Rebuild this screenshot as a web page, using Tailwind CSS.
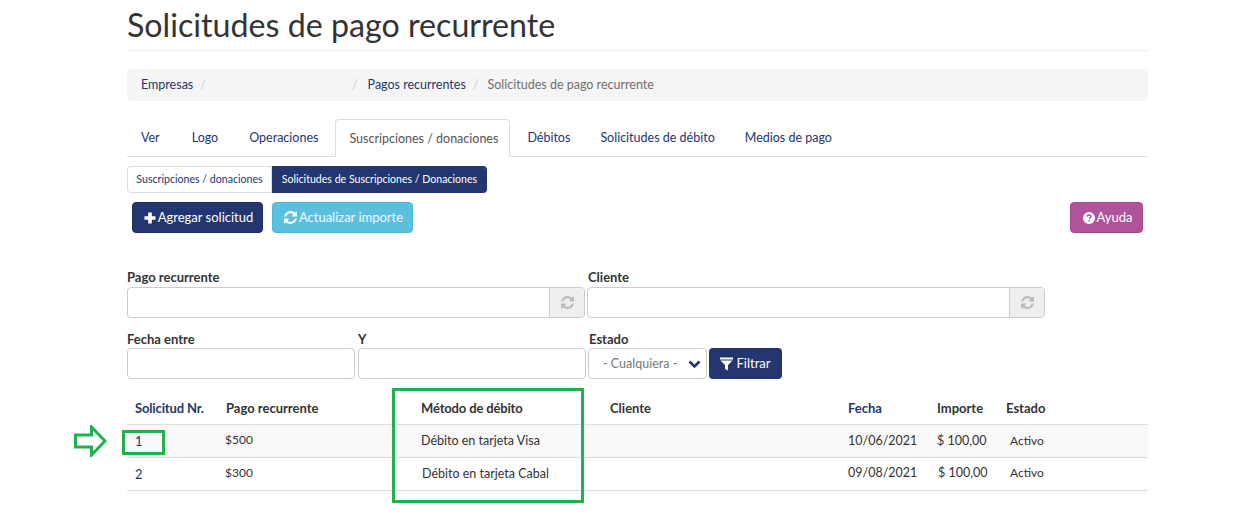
<!DOCTYPE html>
<html lang="es">
<head>
    <meta charset="UTF-8">
    <title>Solicitudes de pago recurrente</title>
    <script src="https://cdn.jsdelivr.net/npm/@tailwindcss/browser@4"></script>
</head>
<body class="bg-white font-['Lato',sans-serif] text-[13px] text-[#333]">
    <div class="relative w-[1021px] ml-[127px] h-[531px]">
        <!-- titulo -->
        <h1 class="h-[51px] border-b border-[#eee] text-[32.200px] leading-[50px] text-[#333]">Solicitudes de pago recurrente</h1>

        <!-- breadcrumb -->
        <div class="mt-[18px] h-[32px] bg-[#f5f5f5] rounded flex items-center px-[14px] text-[12.500px] text-[#6f6f6f]">
            <span class="text-[#23366f]">Empresas</span>
            <span class="ml-[7px] text-[#ccc]">/</span>
            <span class="ml-[146px] text-[#ccc]">/</span>
            <span class="ml-[10px] text-[#23366f]">Pagos recurrentes</span>
            <span class="ml-[7px] text-[#ccc]">/</span>
            <span class="ml-[9px]">Solicitudes de pago recurrente</span>
        </div>

        <!-- tabs -->
        <div class="mt-[18px] h-[38px] border-b border-[#ddd] flex text-[12.500px] text-[#23366f] whitespace-nowrap">
            <a class="pl-[14px] pr-[17px] pt-[10px]">Ver</a>
            <a class="px-[15px] pt-[10px]">Logo</a>
            <a class="pl-[16px] pr-[17px] pt-[10px]">Operaciones</a>
            <a class="w-[175px] h-[38px] px-[13px] pt-[10px] bg-white border border-[#ddd] border-b-white rounded-t text-[#555]">Suscripciones / donaciones</a>
            <a class="pl-[17px] pr-[15px] pt-[10px]">Débitos</a>
            <a class="px-[15px] pt-[10px]">Solicitudes de débito</a>
            <a class="px-[15px] pt-[10px]">Medios de pago</a>
        </div>

        <!-- subtabs -->
        <div class="mt-[9px] flex h-[27px] text-[10.600px] leading-[25px] whitespace-nowrap">
            <a class="w-[145px] border border-[#ddd] rounded-l text-center text-[#23366f]">Suscripciones / donaciones</a>
            <a class="w-[215px] bg-[#23366f] rounded-r text-center leading-[27px] text-white">Solicitudes de Suscripciones / Donaciones</a>
        </div>

        <!-- botones -->
        <div class="mt-[9px] flex h-[31px] pl-[5px] pr-[5px]">
            <button class="w-[131px] pl-[2px] bg-[#23366f] border border-[#1c2c5c] rounded text-white flex items-center justify-center gap-[2px]">
                <svg class="w-[12px] h-[12px]" viewBox="0 0 12 12"><path d="M4.200 0.500h3.600v3.700h3.700v3.600H7.800v3.700H4.200V7.800H0.500V4.200h3.700z" fill="#fff"/></svg>
                Agregar solicitud
            </button>
            <button class="ml-[9px] w-[141px] pl-[2px] bg-[#5bc0de] border border-[#46b8da] rounded text-white/90 flex items-center justify-center gap-[2px]">
                <svg class="w-[13px] h-[13px]" viewBox="0 0 1536 1536"><path fill="#fff" d="M1511 928q0 5-1 7-64 268-268 434.500T764 1536q-146 0-282.500-55T238 1324l-129 129q-19 19-45 19t-45-19-19-45V960q0-26 19-45t45-19h448q26 0 45 19t19 45-19 45l-137 137q71 66 161 102t187 36q134 0 250-65t186-179q11-17 53-117 8-23 30-23h192q13 0 22.500 9.500t9.500 22.500zm25-800v448q0 26-19 45t-45 19h-448q-26 0-45-19t-19-45 19-45l138-138q-148-137-349-137-134 0-250 65T332 500q-11 17-53 117-8 23-30 23H50q-13 0-22.500-9.500T18 608v-7q65-268 270-434.500T768 0q146 0 284 55.500T1297 212l130-129q19-19 45-19t45 19 19 45z"/></svg>
                Actualizar importe
            </button>
            <button class="ml-auto w-[73px] pl-[2px] bg-[#b0539b] border border-[#a34a8f] rounded text-white flex items-center justify-center gap-[2px]">
                <svg class="w-[12px] h-[12px]" viewBox="0 0 12 12"><circle cx="6" cy="6" r="6" fill="#fff"/><path d="M4.100 4.600C4.200 3.500 5 3 6 3c1.100 0 1.900.6 1.900 1.500 0 1.300-1.500 1.300-1.500 2.300" fill="none" stroke="#b0539b" stroke-width="1.400"/><rect x="5.500" y="7.800" width="1.600" height="1.500" fill="#b0539b"/></svg>
                Ayuda
            </button>
        </div>

        <!-- filtros -->
        <div class="mt-[36px] flex">
            <div class="w-[458px] mr-[2px]">
                <label class="block h-[18px] leading-[16px] font-bold">Pago recurrente</label>
                <div class="h-[31px] border border-[#ccc] rounded flex justify-end">
                    <span class="w-[35px] bg-[#eee] border-l border-[#ccc] rounded-r flex items-center justify-center">
                        <svg class="w-[13px] h-[13px]" viewBox="0 0 1536 1536"><path fill="#bbb" d="M1511 928q0 5-1 7-64 268-268 434.500T764 1536q-146 0-282.500-55T238 1324l-129 129q-19 19-45 19t-45-19-19-45V960q0-26 19-45t45-19h448q26 0 45 19t19 45-19 45l-137 137q71 66 161 102t187 36q134 0 250-65t186-179q11-17 53-117 8-23 30-23h192q13 0 22.500 9.500t9.500 22.500zm25-800v448q0 26-19 45t-45 19h-448q-26 0-45-19t-19-45 19-45l138-138q-148-137-349-137-134 0-250 65T332 500q-11 17-53 117-8 23-30 23H50q-13 0-22.500-9.500T18 608v-7q65-268 270-434.500T768 0q146 0 284 55.500T1297 212l130-129q19-19 45-19t45 19 19 45z"/></svg>
                    </span>
                </div>
            </div>
            <div class="w-[458px]">
                <label class="block h-[18px] leading-[16px] font-bold ml-[1px]">Cliente</label>
                <div class="h-[31px] border border-[#ccc] rounded flex justify-end">
                    <span class="w-[35px] bg-[#eee] border-l border-[#ccc] rounded-r flex items-center justify-center">
                        <svg class="w-[13px] h-[13px]" viewBox="0 0 1536 1536"><path fill="#bbb" d="M1511 928q0 5-1 7-64 268-268 434.500T764 1536q-146 0-282.500-55T238 1324l-129 129q-19 19-45 19t-45-19-19-45V960q0-26 19-45t45-19h448q26 0 45 19t19 45-19 45l-137 137q71 66 161 102t187 36q134 0 250-65t186-179q11-17 53-117 8-23 30-23h192q13 0 22.500 9.500t9.500 22.500zm25-800v448q0 26-19 45t-45 19h-448q-26 0-45-19t-19-45 19-45l138-138q-148-137-349-137-134 0-250 65T332 500q-11 17-53 117-8 23-30 23H50q-13 0-22.500-9.500T18 608v-7q65-268 270-434.500T768 0q146 0 284 55.500T1297 212l130-129q19-19 45-19t45 19 19 45z"/></svg>
                    </span>
                </div>
            </div>
        </div>
        <div class="mt-[13px] flex">
            <div class="w-[228px] mr-[3px]">
                <label class="block h-[17px] leading-[16px] font-bold">Fecha entre</label>
                <div class="h-[31px] border border-[#ccc] rounded"></div>
            </div>
            <div class="w-[228px] mr-[2px]">
                <label class="block h-[17px] leading-[16px] font-bold">Y</label>
                <div class="h-[31px] border border-[#ccc] rounded"></div>
            </div>
            <div class="w-[119px] mr-[2px]">
                <label class="block h-[17px] leading-[16px] font-bold ml-[1px]">Estado</label>
                <div class="h-[31px] border border-[#ccc] rounded flex items-center pt-[1px] pl-[14px] pr-[5px] text-[#777] text-[12.500px]">
                    - Cualquiera -
                    <svg class="ml-auto w-[13px] h-[9px]" viewBox="0 0 13 9"><path d="M1.500 1.500l5 5 5-5" fill="none" stroke="#23366f" stroke-width="2.600"/></svg>
                </div>
            </div>
            <button class="self-end w-[73px] h-[31px] bg-[#23366f] rounded text-white flex items-center justify-center gap-[4px]">
                <svg class="w-[13px] h-[14px]" viewBox="0 0 13 14"><path d="M0 .5h13v2H0zM.5 3.500h12L8 8v5.500l-3-1.500V8z" fill="#fff"/></svg>
                <span class="mr-[1px]">Filtrar</span>
            </button>
        </div>

        <!-- tabla -->
        <table class="mt-[8px] w-full table-fixed border-collapse">
            <colgroup>
                <col class="w-[91px]"><col class="w-[195px]"><col class="w-[189px]"><col class="w-[238px]"><col class="w-[89px]"><col class="w-[69px]"><col>
            </colgroup>
            <thead>
                <tr class="h-[37px] border-b border-[#ddd] text-left">
                    <th class="px-2 pt-[6px] font-bold tracking-[-0.15px] text-[#23366f]">Solicitud Nr.</th>
                    <th class="px-2 pt-[6px] font-bold">Pago recurrente</th>
                    <th class="px-2 pt-[6px] font-bold tracking-[-0.15px]">Método de débito</th>
                    <th class="px-2 pt-[6px] font-bold">Cliente</th>
                    <th class="px-2 pt-[6px] font-bold text-[#23366f]">Fecha</th>
                    <th class="px-2 pt-[6px] font-bold">Importe</th>
                    <th class="px-2 pt-[6px] font-bold">Estado</th>
                </tr>
            </thead>
            <tbody>
                <tr class="h-[33px] bg-[#f9f9f9] border-b border-[#ddd] text-[12.500px]">
                    <td class="px-2 pt-[2px] text-[13px] text-[#23366f]">1</td>
                    <td class="pl-[7px] pb-[2px] text-[12px]">$500</td>
                    <td class="px-2 pt-[2px]">Débito en tarjeta Visa</td>
                    <td class="px-2"></td>
                    <td class="px-2 pt-[1px]">10/06/2021</td>
                    <td class="px-2 pt-[1px]">$ 100,00</td>
                    <td class="pl-[12px] text-[12px]">Activo</td>
                </tr>
                <tr class="h-[33px] border-b border-[#ddd] text-[12.500px]">
                    <td class="px-2 pt-[2px] text-[13px] text-[#23366f]">2</td>
                    <td class="pl-[7px] pb-[2px] text-[12px]">$300</td>
                    <td class="pl-[9px] pt-[1px]">Débito en tarjeta Cabal</td>
                    <td class="px-2"></td>
                    <td class="px-2 pb-[1px]">09/08/2021</td>
                    <td class="pl-[9px] pb-[1px]">$ 100,00</td>
                    <td class="pl-[12px] pb-[2px] text-[12px]">Activo</td>
                </tr>
            </tbody>
        </table>
        <div class="h-[3px] bg-[#fafafa]"></div>

        <!-- anotaciones verdes -->
        <div class="absolute left-[-5px] top-[430px] w-[43px] h-[25px] border-[3px] border-[#22b14c]"></div>
        <div class="absolute left-[265px] top-[388px] w-[192px] h-[115px] border-[3px] border-[#22b14c]"></div>
        <svg class="absolute left-[-53px] top-[425px] w-[33px] h-[32px]" viewBox="0 0 33 32"><path d="M1.500 10h16V2L31 16 17.500 30v-8h-16z" fill="#fff" stroke="#22b14c" stroke-width="3"/></svg>
    </div>
</body>
</html>
